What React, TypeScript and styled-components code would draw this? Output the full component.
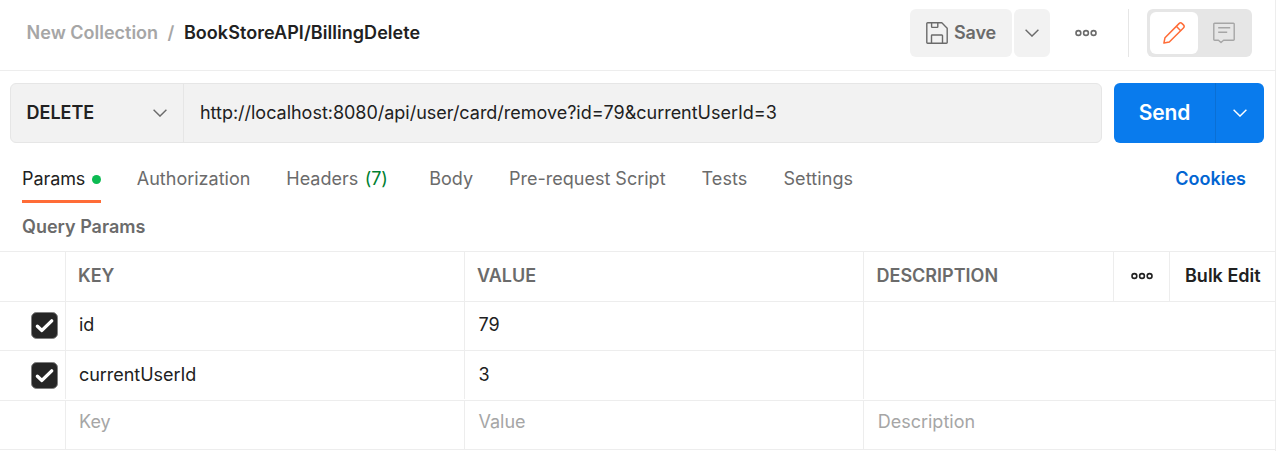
import React from "react";
import styled, { createGlobalStyle } from "styled-components";

const line = "#ededed";
const ink = "#212121";
const muted = "#6b6b6b";
const faint = "#a6a6a6";

const GlobalStyle = createGlobalStyle`
  * { box-sizing: border-box; }
  body {
    margin: 0;
    background: #fff;
    color: ${ink};
    font-family: Inter, "Liberation Sans", sans-serif;
    font-size: 18px;
    line-height: 24px;
    overflow: hidden;
  }
  button { font: inherit; border: 0; padding: 0; background: none; color: inherit; }
  svg { display: block; flex: none; }
`;

const Label = styled.span<{ $track?: number }>`
  letter-spacing: ${(p) => p.$track ?? 0}px;
  white-space: pre;
`;

const Panel = styled.main`
  width: 1276px;
  height: 451px;
  border-right: 1px solid ${line};
`;

const TopBar = styled.header`
  display: flex;
  align-items: flex-start;
  height: 71px;
  padding: 9px 23px 0 26.6px;
  border-bottom: 1px solid ${line};
`;

const Breadcrumb = styled.nav`
  display: flex;
  align-items: center;
  flex: 1;
  height: 48px;
  gap: 9.5px;
  font-weight: 600;
  color: ${faint};
`;

const Current = styled.span`
  color: ${ink};
  font-weight: 600;
`;

const ToolButton = styled.button<{ $width: number }>`
  display: flex;
  align-items: center;
  justify-content: center;
  gap: 6px;
  width: ${(p) => p.$width}px;
  height: 48px;
  margin-right: 2px;
  border-radius: 6px;
  background: #f2f2f2;
  color: ${muted};
  font-weight: 600;
`;

const MoreButton = styled.button`
  display: grid;
  place-items: center;
  width: 68px;
  height: 48px;
  color: ${muted};
`;

const Divider = styled.div`
  width: 1px;
  height: 48px;
  margin: 0 18px 0 8px;
  background: #e6e6e6;
`;

const ModeSwitch = styled.div`
  display: flex;
  width: 105px;
  height: 48px;
  padding: 3px;
  border-radius: 6px;
  background: #e6e6e6;
`;

const Mode = styled.button<{ $active?: boolean }>`
  display: grid;
  place-items: center;
  width: ${(p) => (p.$active ? 48 : 51)}px;
  height: 42px;
  border-radius: 6px;
  background: ${(p) => (p.$active ? "#fff" : "transparent")};
  color: ${(p) => (p.$active ? "#ff6c37" : faint)};
`;

const RequestRow = styled.section`
  display: flex;
  gap: 12px;
  padding: 12px 0 0 10px;
`;

const RequestField = styled.div`
  display: flex;
  width: 1092px;
  height: 60px;
  border: 1px solid #e6e6e6;
  border-radius: 6px;
  background: #f2f2f2;
`;

const Method = styled.div`
  display: flex;
  align-items: center;
  justify-content: space-between;
  width: 173px;
  padding: 0 16px 0 15.5px;
  border-right: 1px solid #e6e6e6;
  font-weight: 600;
  svg { color: ${muted}; }
`;

const Url = styled.div`
  display: flex;
  align-items: center;
  padding-left: 16px;
`;

const SendButton = styled.div`
  display: flex;
  width: 150px;
  height: 60px;
  border-radius: 6px;
  background: #097bed;
  color: #fff;
  font-size: 21px;
  font-weight: 600;
`;

const SendMain = styled.button`
  width: 101px;
`;

const SendMore = styled.button`
  display: grid;
  place-items: center;
  flex: 1;
  border-left: 1px solid #0a6fd4;
`;

const Tabs = styled.nav`
  display: flex;
  gap: 36px;
  height: 60px;
  padding: 24px 29px 0 22px;
  color: ${muted};
`;

const Tab = styled.div<{ $active?: boolean; $after?: number }>`
  display: flex;
  align-items: center;
  gap: 6.5px;
  height: 36px;
  padding-bottom: 9px;
  margin-right: ${(p) => p.$after ?? 0}px;
  border-bottom: 3px solid ${(p) => (p.$active ? "#ff6c37" : "transparent")};
  color: ${(p) => (p.$active ? ink : muted)};
`;

const Dot = styled.i`
  width: 9px;
  height: 9px;
  border-radius: 50%;
  background: #0cbb52;
`;

const Count = styled.span`
  color: #007f31;
`;

const Cookies = styled.a`
  margin-left: auto;
  color: #0265d2;
  font-weight: 600;
`;

const SectionTitle = styled.h2`
  height: 48px;
  margin: 0;
  padding: 12px 0 0 22px;
  font-size: 18px;
  font-weight: 600;
  line-height: 24px;
  color: ${muted};
`;

const Table = styled.div`
  border-top: 1px solid ${line};
`;

const Row = styled.div<{ $height: number; $head?: boolean; $gap?: boolean }>`
  display: grid;
  grid-template-columns: ${(p) =>
    p.$head ? "65px 399px 399px 250px 56px 106px" : "65px 399px 399px 412px"};
  height: ${(p) => p.$height}px;
  padding-bottom: ${(p) => (p.$gap ? 1 : 0)}px;
  border-bottom: 1px solid ${line};
  color: ${(p) => (p.$head ? muted : ink)};
  font-weight: ${(p) => (p.$head ? 600 : 400)};
`;

const Cell = styled.div<{ $pad?: number; $lift?: number; $tone?: string; $center?: boolean }>`
  display: flex;
  align-items: center;
  justify-content: ${(p) => (p.$center ? "center" : "flex-start")};
  padding-left: ${(p) => p.$pad ?? 0}px;
  padding-bottom: ${(p) => p.$lift ?? 0}px;
  color: ${(p) => p.$tone ?? "inherit"};
  & + & { border-left: 1px solid ${line}; }
`;

const Chevron = () => (
  <svg width="14" height="8" viewBox="0 0 14 8" fill="none" stroke="currentColor" strokeWidth="1.4">
    <path d="M.6.8 7 7.1 13.4.8" />
  </svg>
);

const Dots = () => (
  <svg width="22" height="8" viewBox="0 0 22 8" fill="none" stroke="currentColor" strokeWidth="1.6">
    <circle cx="3.4" cy="4" r="2.4" />
    <circle cx="11" cy="4" r="2.4" />
    <circle cx="18.6" cy="4" r="2.4" />
  </svg>
);

const SaveIcon = () => (
  <svg width="22" height="22" viewBox="0 0 22 22" fill="none" stroke="currentColor" strokeWidth="1.4" strokeLinejoin="round">
    <path d="M1.6.8h14.2l5.4 5.4v14.2a.8.8 0 0 1-.8.8H1.6a.8.8 0 0 1-.8-.8V1.6a.8.8 0 0 1 .8-.8Z" />
    <path d="M5.6.8v4a.6.6 0 0 0 .6.6h5a.6.6 0 0 0 .6-.6v-4M5.5 21.2v-7.6a.6.6 0 0 1 .6-.6h9.8a.6.6 0 0 1 .6.6v7.6" />
  </svg>
);

const PencilIcon = () => (
  <svg width="22" height="22" viewBox="0 0 22 22" fill="none" stroke="currentColor" strokeWidth="1.5" strokeLinejoin="round">
    <path d="M.9 21.1l1.1-5.4L16 1.6a2.2 2.2 0 0 1 3.1 0l1.3 1.3a2.2 2.2 0 0 1 0 3.1L6.3 20 .9 21.1Z" />
    <path d="M13.3 4.3l4.4 4.4" />
  </svg>
);

const CommentIcon = () => (
  <svg width="22" height="22" viewBox="0 0 22 22" fill="none" stroke="currentColor" strokeWidth="1.4" strokeLinejoin="round">
    <path d="M1.6 1.2h18.8a.8.8 0 0 1 .8.8v15.5a.8.8 0 0 1-.8.8H10.6l-2.6 2.3-2.6-2.3H1.6a.8.8 0 0 1-.8-.8V2a.8.8 0 0 1 .8-.8Z" />
    <path d="M5.2 5.8h12M5.2 10.3h9" />
  </svg>
);

const Checkbox = () => (
  <svg width="27" height="27" viewBox="0 0 27 27" fill="none">
    <rect x=".5" y=".5" width="26" height="26" rx="5" fill="#262626" stroke="#808080" />
    <path d="M6.4 14.2l4.5 4.2 9.8-9.5" stroke="#fff" strokeWidth="3.4" strokeLinecap="round" strokeLinejoin="round" />
  </svg>
);

const params = [
  { key: "id", value: "79", height: 49, lift: 2 },
  { key: "currentUserId", value: "3", height: 50, lift: 0 },
];

export default function App() {
  return (
    <>
      <GlobalStyle />
      <Panel>
        <TopBar>
          <Breadcrumb>
            <Label>New Collection</Label>
            <Label>/</Label>
            <Current><Label $track={0.05}>BookStoreAPI/BillingDelete</Label></Current>
          </Breadcrumb>
          <ToolButton $width={102}><SaveIcon /><Label $track={-0.1}>Save</Label></ToolButton>
          <ToolButton $width={36}><Chevron /></ToolButton>
          <MoreButton><Dots /></MoreButton>
          <Divider />
          <ModeSwitch>
            <Mode $active><PencilIcon /></Mode>
            <Mode><CommentIcon /></Mode>
          </ModeSwitch>
        </TopBar>

        <RequestRow>
          <RequestField>
            <Method><Label>DELETE</Label><Chevron /></Method>
            <Url><Label $track={-0.02}>http://localhost:8080/api/user/card/remove?id=79&amp;currentUserId=3</Label></Url>
          </RequestField>
          <SendButton>
            <SendMain><Label $track={-0.1}>Send</Label></SendMain>
            <SendMore><Chevron /></SendMore>
          </SendButton>
        </RequestRow>

        <Tabs>
          <Tab $active><Label $track={-0.08}>Params</Label><Dot /></Tab>
          <Tab><Label>Authorization</Label></Tab>
          <Tab $after={5.6}><Label>Headers</Label><Count><Label $track={-0.15}>(7)</Label></Count></Tab>
          <Tab><Label>Body</Label></Tab>
          <Tab><Label>Pre-request Script</Label></Tab>
          <Tab><Label $track={0.1}>Tests</Label></Tab>
          <Tab><Label $track={0.1}>Settings</Label></Tab>
          <Cookies><Label>Cookies</Label></Cookies>
        </Tabs>

        <SectionTitle><Label>Query Params</Label></SectionTitle>

        <Table>
          <Row $head $height={50}>
            <Cell />
            <Cell $pad={12} $lift={2}><Label>KEY</Label></Cell>
            <Cell $pad={12} $lift={2}><Label>VALUE</Label></Cell>
            <Cell $pad={12.5} $lift={2}><Label>DESCRIPTION</Label></Cell>
            <Cell $center $lift={1} $tone={ink}><Dots /></Cell>
            <Cell $pad={15} $lift={2} $tone={ink}><Label>Bulk Edit</Label></Cell>
          </Row>
          {params.map((p, i) => (
            <Row key={p.key} $height={p.height} $gap={i === 1}>
              <Cell $pad={31} $lift={p.lift && 1}><Checkbox /></Cell>
              <Cell $pad={13} $lift={p.lift}><Label $track={-0.04}>{p.key}</Label></Cell>
              <Cell $pad={13.6} $lift={p.lift}><Label>{p.value}</Label></Cell>
              <Cell />
            </Row>
          ))}
          <Row $height={49}>
            <Cell />
            <Cell $pad={13} $lift={6} $tone={faint}><Label>Key</Label></Cell>
            <Cell $pad={13.5} $lift={6} $tone={faint}><Label>Value</Label></Cell>
            <Cell $pad={13.7} $lift={6} $tone={faint}><Label>Description</Label></Cell>
          </Row>
        </Table>
      </Panel>
    </>
  );
}
